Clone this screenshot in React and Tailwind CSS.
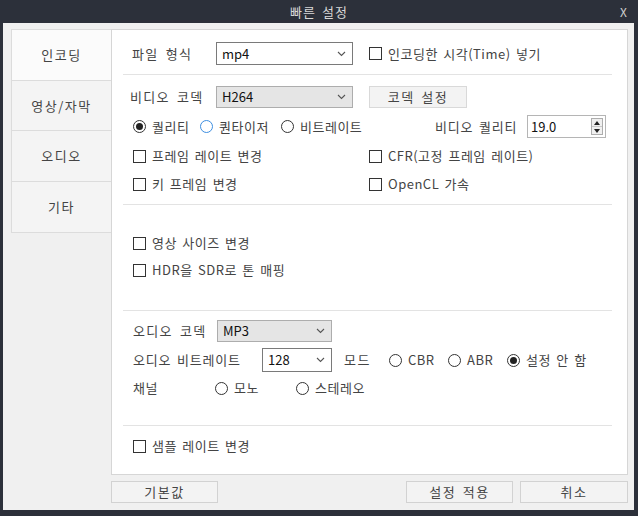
import React from 'react'

const Chevron = () => (
  <svg width="9" height="6" viewBox="0 0 9 6" className="shrink-0">
    <polyline points="1,1 4.5,4.5 8,1" fill="none" stroke="#555" strokeWidth="1.1" />
  </svg>
)

const Combo = ({ value, w, grey }) => (
  <div
    className={`flex h-full items-center justify-between border pl-[5px] pr-[6px] tracking-normal ${
      grey ? 'bg-[#e5e5e5] border-[#adadad]' : 'bg-white border-[#7a7a7a]'
    } ${w}`}
  >
    <span className="text-[13px] text-[#111]">{value}</span>
    <Chevron />
  </div>
)

const Check = ({ label }) => (
  <div className="flex items-center gap-[6px]">
    <span className="h-[13px] w-[13px] shrink-0 border border-[#333] bg-white" />
    <span className="whitespace-nowrap">{label}</span>
  </div>
)

const Radio = ({ label, on, blue }) => (
  <div className="flex items-center gap-[6px]">
    <span
      className={`flex h-[13px] w-[13px] shrink-0 items-center justify-center rounded-full border bg-white ${
        blue ? 'border-[#3d8ee0]' : 'border-[#333]'
      }`}
    >
      {on && <span className="h-[7px] w-[7px] rounded-full bg-[#222]" />}
    </span>
    <span className="whitespace-nowrap">{label}</span>
  </div>
)

// wider spacing for the first column labels, like the original dialog font
const Label = ({ children, w }) => (
  <span className={`whitespace-nowrap tracking-[1.3px] [word-spacing:3px] ${w}`}>{children}</span>
)

const Sep = ({ mt }) => <div className={`ml-[11px] mr-[15px] h-px bg-[#e3e3e3] ${mt}`} />

const Tab = ({ label, active }) => (
  <div
    className={`flex h-[51px] items-center justify-center border-b border-[#dcdcdc] tracking-[1.5px] last:border-b-0 ${
      active ? 'bg-[#fbfbfb]' : 'bg-[#f4f4f4]'
    }`}
  >
    {label}
  </div>
)

const Btn = ({ label, w = 'w-[107px]' }) => (
  <div className={`flex h-[22px] items-center justify-center border border-[#d2d2d2] bg-[#f3f3f3] tracking-[1.5px] ${w}`}>
    {label}
  </div>
)

export default function App() {
  return (
    <div
      className="flex h-[516px] w-[638px] flex-col bg-[#2c303a] text-[13px] tracking-[0.5px] text-[#444] [word-spacing:2px]"
      style={{ fontFamily: '"Noto Sans CJK KR", "Noto Sans", sans-serif' }}
    >
      <div className="relative flex h-[23px] items-center justify-center tracking-[1px] text-[#d8d8d8]">
        <span className="text-[#d8d8d8]">빠른 설정</span>
        <span className="absolute right-[10px] top-[3px] text-[12px] text-[#cfcfcf]">X</span>
      </div>

      <div className="ml-[3px] mr-[4px] flex h-[487px] flex-col bg-[#f0f0f0] pl-[8px] pt-[6px]">
        <div className="flex">
          <div className="flex h-[204px] w-[100px] flex-col border border-r-0 border-[#dcdcdc]">
            <Tab label="인코딩" active />
            <Tab label="영상/자막" />
            <Tab label="오디오" />
            <Tab label="기타" />
          </div>

          <div className="flex h-[446px] w-[517px] flex-col border border-[#d6d6d6] bg-white">
            <div className="mt-[12px] flex h-[23px] items-center pl-[20px]">
              <Label w="w-[84px]">파일 형식</Label>
              <Combo value="mp4" w="w-[137px]" />
              <div className="ml-[16px]">
                <Check label="인코딩한 시각(Time) 넣기" />
              </div>
            </div>
            <Sep mt="mt-[9px]" />

            <div className="mt-[11px] flex h-[22px] items-center pl-[18px]">
              <Label w="w-[86px]">비디오 코덱</Label>
              <Combo value="H264" w="w-[137px]" grey />
              <div className="ml-[16px] flex h-[22px] w-[98px] items-center justify-center border border-[#d9d9d9] bg-[#f3f3f3] tracking-[1.5px]">
                코덱 설정
              </div>
            </div>

            <div className="mt-[7px] flex h-[23px] items-center pl-[21px]">
              <div className="w-[67px]">
                <Radio label="퀄리티" on />
              </div>
              <div className="w-[81px]">
                <Radio label="퀀타이저" blue />
              </div>
              <div className="w-[154px]">
                <Radio label="비트레이트" />
              </div>
              <span className="w-[92px] whitespace-nowrap tracking-[0.8px]">비디오 퀄리티</span>
              <div className="flex h-[23px] w-[79px] items-center justify-between border border-[#b5b5b5] bg-white pl-[3px] pr-[2px] tracking-normal">
                <span className="text-[13px] text-[#111]">19.0</span>
                <div className="flex h-[17px] w-[12px] flex-col border border-[#adadad] bg-[#f0f0f0]">
                  <div className="flex flex-1 items-center justify-center border-b border-[#c8c8c8]">
                    <svg width="6" height="4" viewBox="0 0 6 4"><polygon points="0,4 3,0 6,4" fill="#222" /></svg>
                  </div>
                  <div className="flex flex-1 items-center justify-center">
                    <svg width="6" height="4" viewBox="0 0 6 4"><polygon points="0,0 3,4 6,0" fill="#222" /></svg>
                  </div>
                </div>
              </div>
            </div>

            <div className="mt-[8px] flex h-[20px] items-center pl-[21px]">
              <div className="w-[236px]">
                <Check label="프레임 레이트 변경" />
              </div>
              <Check label="CFR(고정 프레임 레이트)" />
            </div>
            <div className="mt-[8px] flex h-[20px] items-center pl-[21px]">
              <div className="w-[236px]">
                <Check label="키 프레임 변경" />
              </div>
              <Check label="OpenCL 가속" />
            </div>
            <Sep mt="mt-[10px]" />

            <div className="mt-[28px] flex h-[20px] items-center pl-[21px]">
              <Check label="영상 사이즈 변경" />
            </div>
            <div className="mt-[7px] flex h-[20px] items-center pl-[21px]">
              <Check label="HDR을 SDR로 톤 매핑" />
            </div>
            <Sep mt="mt-[30px]" />

            <div className="mt-[9px] flex h-[22px] items-center pl-[21px]">
              <Label w="w-[84px]">오디오 코덱</Label>
              <Combo value="MP3" w="w-[115px]" grey />
            </div>
            <div className="mt-[6px] flex h-[24px] items-center pl-[21px]">
              <span className="w-[129px] whitespace-nowrap tracking-[0.8px]">오디오 비트레이트</span>
              <Combo value="128" w="w-[70px]" />
              <span className="ml-[12px] w-[45px] tracking-[1.5px]">모드</span>
              <div className="w-[59px]">
                <Radio label="CBR" />
              </div>
              <div className="w-[59px]">
                <Radio label="ABR" />
              </div>
              <Radio label="설정 안 함" on />
            </div>
            <div className="mt-[6px] flex h-[20px] items-center pl-[21px]">
              <span className="w-[82px]">채널</span>
              <div className="w-[81px]">
                <Radio label="모노" />
              </div>
              <Radio label="스테레오" />
            </div>
            <Sep mt="mt-[27px]" />

            <div className="mt-[10px] flex h-[20px] items-center pl-[21px]">
              <Check label="샘플 레이트 변경" />
            </div>
          </div>
        </div>

        <div className="mt-[6px] flex pl-[100px]">
          <Btn label="기본값" />
          <div className="ml-auto mr-[6px] flex gap-[7px]">
            <Btn label="설정 적용" />
            <Btn label="취소" w="w-[108px]" />
          </div>
        </div>
      </div>
    </div>
  )
}
